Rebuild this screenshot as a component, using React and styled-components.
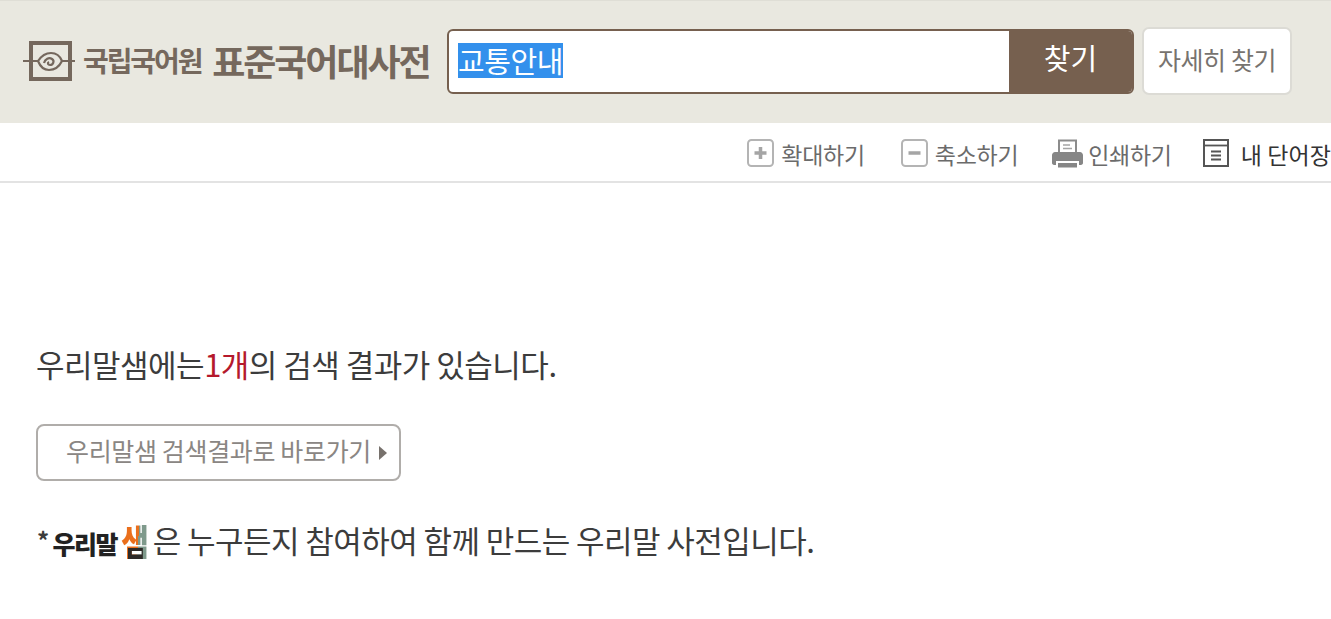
import React from 'react';
import styled, { createGlobalStyle } from 'styled-components';

const FONT = '"Noto Sans CJK KR", "Noto Sans", sans-serif';

const GlobalStyle = createGlobalStyle`
  html, body {
    margin: 0;
    padding: 0;
    background: #fff;
    overflow: hidden;
    font-family: ${FONT};
  }
`;

const Page = styled.div`
  width: 1331px;
  height: 619px;
  overflow: hidden;
`;

const Header = styled.header`
  display: flex;
  align-items: center;
  height: 123px;
  box-sizing: border-box;
  padding: 0 0 2px 23px;
  background: #e9e8e0;
  border-top: 1px solid #dfded6;
`;

const Logo = styled.div`
  display: flex;
  align-items: center;
  width: 424px;
  flex: none;
  color: #75685d;
`;

const LogoOrg = styled.span`
  margin: 0 0 2px 8px;
  font-size: 28px;
  font-weight: 700;
  letter-spacing: -2.1px;
  line-height: 40px;
`;

const LogoTitle = styled.span`
  margin: 0 0 2px 11px;
  font-size: 36px;
  font-weight: 700;
  letter-spacing: -2.1px;
  line-height: 40px;
`;

const SearchBox = styled.div`
  display: flex;
  width: 687px;
  height: 65px;
  flex: none;
  box-sizing: border-box;
  border: 2px solid #76604f;
  border-radius: 6px;
  background: #fff;
  overflow: hidden;
`;

const SearchInput = styled.div`
  flex: 1;
  display: flex;
  align-items: center;
  padding: 0 0 2px 9px;
`;

const Selected = styled.span`
  background: #3390ec;
  color: #fff;
  font-size: 29px;
  line-height: 35px;
  letter-spacing: -0.4px;
`;

const SearchButton = styled.button`
  width: 123px;
  border: none;
  padding: 0 0 8px;
  background: #76604f;
  color: #fff;
  font-family: ${FONT};
  font-size: 29px;
  font-weight: 400;
`;

const DetailButton = styled.button`
  width: 150px;
  height: 68px;
  margin-left: 8px;
  flex: none;
  box-sizing: border-box;
  border: 2px solid #dcdbd5;
  border-radius: 7px;
  background: #fff;
  color: #77736f;
  font-family: ${FONT};
  font-size: 25px;
  letter-spacing: -0.4px;
  padding: 0 0 4px;
`;

const Toolbar = styled.nav`
  display: flex;
  justify-content: flex-end;
  align-items: center;
  height: 60px;
  box-sizing: border-box;
  padding-top: 2px;
  border-bottom: 2px solid #e3e3e3;
  overflow: hidden;
`;

const ToolItem = styled.a`
  display: flex;
  align-items: center;
  flex: none;
  gap: ${(p) => p.$gap || 7}px;
  margin-left: ${(p) => p.$left || 0}px;
  color: ${(p) => (p.$dark ? '#333' : '#6b6b6b')};
  font-size: 23px;
  letter-spacing: ${(p) => (p.$dark ? '0.1px' : '-0.3px')};
  line-height: 32px;
  white-space: nowrap;
`;

const ToolLabel = styled.span`
  margin-top: 2px;
`;

const Content = styled.main`
  padding: 160px 0 0 36px;
  color: #3c3c3c;
`;

const Message = styled.p`
  margin: 0;
  font-size: 31px;
  line-height: 42px;
  letter-spacing: -0.5px;
`;

const Count = styled.span`
  color: #b5192c;
`;

const GoButton = styled.a`
  display: flex;
  align-items: center;
  width: 365px;
  height: 57px;
  margin-top: 39px;
  box-sizing: border-box;
  padding: 0 0 6px 28px;
  border: 2px solid #b0adaa;
  border-radius: 8px;
  color: #8a8683;
  font-size: 25px;
  letter-spacing: -0.35px;
  white-space: nowrap;
`;

const Arrow = styled.i`
  width: 0;
  height: 0;
  margin: 6px 0 0 8px;
  border-left: 8px solid #77716c;
  border-top: 7px solid transparent;
  border-bottom: 7px solid transparent;
`;

const Note = styled.p`
  display: flex;
  align-items: center;
  margin: 35px 0 0 1px;
  font-size: 31px;
  line-height: 42px;
  letter-spacing: -0.56px;
  white-space: nowrap;
`;

const Star = styled.span`
  margin-right: 4px;
  font-size: 24px;
  font-weight: 700;
`;

const BrandName = styled.b`
  color: #222;
  font-size: 25px;
  font-weight: 900;
  letter-spacing: -1.5px;
  margin-top: 6px;
`;

// 로고 글자: 주황 + 회녹색 모음 + 어두운 받침
const BrandMark = styled.b`
  margin: 0 5px 0 4px;
  font-size: 30px;
  font-weight: 900;
  letter-spacing: -1px;
  transform: scaleY(1.2);
  color: transparent;
  background:
    linear-gradient(180deg, transparent 66%, #2e2a28 66%) 60% 0 / 55% 100% no-repeat,
    linear-gradient(95deg, #ea6f1c 62%, #7f9a8c 62%);
  -webkit-background-clip: text;
  background-clip: text;
`;

const Emblem = () => (
  <svg width="52" height="40" viewBox="0 0 52 40" fill="none" stroke="#75685d" style={{ flex: 'none' }}>
    <rect x="8" y="2" width="39" height="36" strokeWidth="4" />
    <path d="M0 20H15M39 20H52" strokeWidth="1.800" />
    <path d="M15 20C19 14 24 12 28 12C33 12 37 15 39 20C36 26 31 29 26 29C21 29 17 25 15 20Z" strokeWidth="2.200" />
    <path d="M21 22C22 18 26 16 29 18C32 20 30 24 27 24C25 24 24 22 26 21" strokeWidth="2.200" />
  </svg>
);

const PlusIcon = () => (
  <svg width="27" height="28" viewBox="0 0 27 28" fill="none">
    <rect x="1" y="1" width="25" height="26" rx="3.500" stroke="#b4b4b4" strokeWidth="2" />
    <path d="M13.500 8V20M7.500 14H19.500" stroke="#a5a5a5" strokeWidth="3.500" />
  </svg>
);

const MinusIcon = () => (
  <svg width="27" height="28" viewBox="0 0 27 28" fill="none">
    <rect x="1" y="1" width="25" height="26" rx="3.500" stroke="#b4b4b4" strokeWidth="2" />
    <path d="M7.500 14H19.500" stroke="#a5a5a5" strokeWidth="3.500" />
  </svg>
);

const PrintIcon = () => (
  <svg width="31" height="29" viewBox="0 0 31 29" fill="none">
    <path d="M7 13V1.500H24V13" stroke="#8c8c8c" strokeWidth="2" />
    <path d="M11 6H18M11 9.500H20" stroke="#a5a5a5" strokeWidth="1.600" />
    <path d="M3 13H28C29.500 13 31 14.500 31 16V24C31 25.500 29.500 26 28 26H27V22H4V26H3C1.500 26 0 25.500 0 24V16C0 14.500 1.500 13 3 13Z" fill="#868686" />
    <rect x="6" y="24" width="19" height="4.500" fill="#868686" />
  </svg>
);

const WordbookIcon = () => (
  <svg width="26" height="28" viewBox="0 0 26 28" fill="none" stroke="#555">
    <rect x="1" y="1" width="24" height="26" strokeWidth="2" />
    <path d="M1 6.500H25" strokeWidth="1.800" />
    <path d="M8 12.500H18M8 16.500H18M8 20.500H18" strokeWidth="1.800" />
  </svg>
);

const App = () => (
  <Page>
    <GlobalStyle />
    <Header>
      <Logo>
        <Emblem />
        <LogoOrg>국립국어원</LogoOrg>
        <LogoTitle>표준국어대사전</LogoTitle>
      </Logo>
      <SearchBox>
        <SearchInput>
          <Selected>교통안내</Selected>
        </SearchInput>
        <SearchButton>찾기</SearchButton>
      </SearchBox>
      <DetailButton>자세히 찾기</DetailButton>
    </Header>
    <Toolbar>
      <ToolItem><PlusIcon /><ToolLabel>확대하기</ToolLabel></ToolItem>
      <ToolItem $left={36}><MinusIcon /><ToolLabel>축소하기</ToolLabel></ToolItem>
      <ToolItem $left={34} $gap={5}><PrintIcon /><ToolLabel>인쇄하기</ToolLabel></ToolItem>
      <ToolItem $left={31} $gap={12} $dark><WordbookIcon /><ToolLabel>내 단어장</ToolLabel></ToolItem>
    </Toolbar>
    <Content>
      <Message>우리말샘에는<Count>1개</Count>의 검색 결과가 있습니다.</Message>
      <GoButton>우리말샘 검색결과로 바로가기<Arrow /></GoButton>
      <Note>
        <Star>*</Star>
        <BrandName>우리말</BrandName>
        <BrandMark>샘</BrandMark>
        은 누구든지 참여하여 함께 만드는 우리말 사전입니다.
      </Note>
    </Content>
  </Page>
);

export default App;
